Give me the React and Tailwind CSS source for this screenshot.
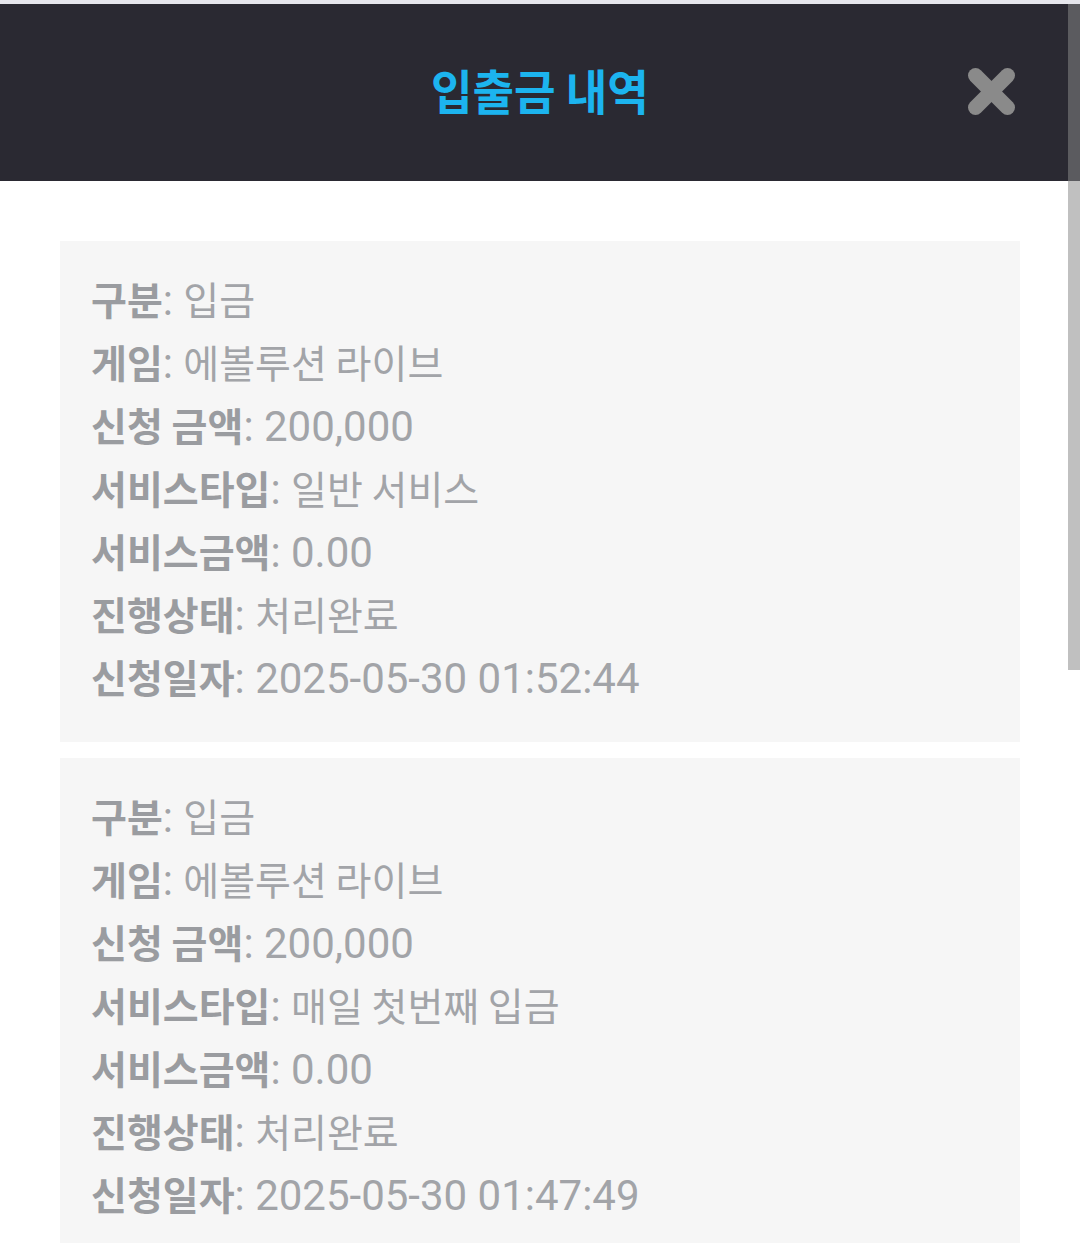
import React from "react";

const records = [
  [
    ["구분", "입금", false],
    ["게임", "에볼루션 라이브", false],
    ["신청 금액", "200,000", true],
    ["서비스타입", "일반 서비스", false],
    ["서비스금액", "0.00", true],
    ["진행상태", "처리완료", false],
    ["신청일자", "2025-05-30 01:52:44", true],
  ],
  [
    ["구분", "입금", false],
    ["게임", "에볼루션 라이브", false],
    ["신청 금액", "200,000", true],
    ["서비스타입", "매일 첫번째 입금", false],
    ["서비스금액", "0.00", true],
    ["진행상태", "처리완료", false],
    ["신청일자", "2025-05-30 01:47:49", true],
  ],
];

function Row({ label, value, numeric }) {
  return (
    <div className="h-[63px] leading-[63px] whitespace-nowrap font-['Roboto',sans-serif] text-[42px]">
      <span className="font-bold text-[39px] leading-none text-[#9a9ca0] font-['Noto_Sans_CJK_KR',sans-serif]">
        {label}
      </span>
      <span className="text-[#a2a4a8] leading-none text-[42px]">: </span>
      {numeric ? (
        <span className="text-[#a2a4a8] leading-none text-[42px] font-['Roboto',sans-serif]">
          {value}
        </span>
      ) : (
        <span className="text-[#a2a4a8] leading-none text-[39px] font-['Noto_Sans_CJK_KR',sans-serif]">
          {value}
        </span>
      )}
    </div>
  );
}

export default function App() {
  return (
    <div className="relative w-[1080px] h-[1243px] overflow-hidden bg-white">
      <div className="h-[4px] bg-[#e6e6ec]" />
      <header className="relative h-[177px] bg-[#2a2932] flex items-center justify-center pb-[8px]">
        <h1 className="text-[48px] font-bold text-[#1cb4ef] scale-x-[0.94] leading-none font-['Noto_Sans_CJK_KR',sans-serif]">
          입출금 내역
        </h1>
        <button className="absolute left-[968px] top-[64px] w-[47px] h-[47px]">
          <svg viewBox="0 0 47 47" width="47" height="47">
            <line x1="7.5" y1="7.5" x2="39.5" y2="39.5" stroke="#8a8a8a" strokeWidth="15" strokeLinecap="round" />
            <line x1="39.5" y1="7.5" x2="7.5" y2="39.5" stroke="#8a8a8a" strokeWidth="15" strokeLinecap="round" />
          </svg>
        </button>
      </header>
      <main className="px-[60px] pt-[60px] flex flex-col gap-[16px]">
        {records.map((rec, i) => (
          <section key={i} className="bg-[#f6f6f6] pl-[31px] pr-[31px] pt-[28px] pb-[32px]">
            {rec.map(([l, v, n], j) => (
              <Row key={j} label={l} value={v} numeric={n} />
            ))}
          </section>
        ))}
      </main>
      <div className="absolute right-0 top-[4px] w-[12px] h-[666px] bg-[rgba(136,136,136,0.53)]" />
    </div>
  );
}
